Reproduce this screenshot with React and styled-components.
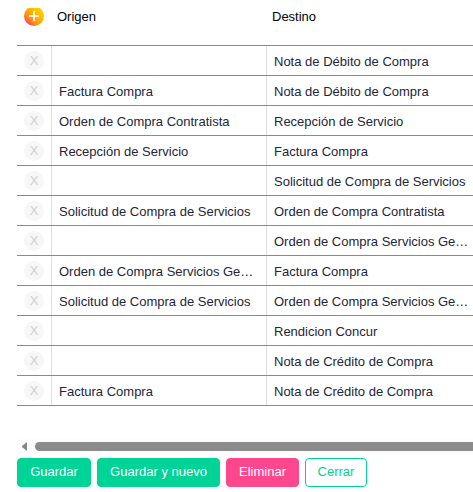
import React from "react";
import styled, { createGlobalStyle } from "styled-components";

const GlobalStyle = createGlobalStyle`
  * { box-sizing: border-box; }
  html, body { margin: 0; background: #fff; overflow: hidden; }
  body { font-family: "Liberation Sans", Arial, sans-serif; font-size: 13px; }
`;

const Panel = styled.main`
  height: 492px;
  padding-left: 17px;
  display: flex;
  flex-direction: column;
  overflow: hidden;
`;

const Grid = styled.section`
  height: 439px;
  flex: none;
  padding-top: 8px;
`;

const Header = styled.div`
  display: grid;
  grid-template-columns: 35px 215px 1fr;
  height: 38px;
  border-bottom: 1px solid #8a8a8d;
  color: #000;
`;

const HeaderAction = styled.div`
  height: 18px;
  padding-left: 7px;
  display: flex;
  align-items: flex-end;
  overflow: hidden;
`;

const AddButton = styled.button`
  flex: none;
  width: 20px;
  height: 20px;
  padding: 0;
  border: 0;
  border-radius: 50%;
  background: linear-gradient(45deg, #ff2a80 8%, #ff8a1c 32%, #ffb400 55%, #ffe000 100%);
  display: grid;
  place-items: center;
`;

const HeaderCell = styled.div`
  padding-left: 5px;
  line-height: 17px;
`;

const Row = styled.div`
  display: grid;
  grid-template-columns: 35px 215px 1fr;
  height: 30px;
  border-bottom: 1px solid #8a8a8d;
`;

const ActionCell = styled.div`
  padding: 5px 0 0 7px;
  border-right: 1px solid #dedede;
`;

const RemoveButton = styled.button`
  display: block;
  width: 20px;
  height: 20px;
  padding: 0;
  border: 0;
  border-radius: 50%;
  background: #f7f7f7;
  color: #d0d0d0;
  font: 13px/20px "Liberation Sans", Arial, sans-serif;
`;

const Cell = styled.div`
  min-width: 0;
  padding: 0 ${(p) => (p.$divided ? 12 : 4)}px 0 7px;
  border-right: ${(p) => (p.$divided ? "1px solid #dedede" : "0")};
  color: #23263b;
  line-height: 31px;
  white-space: nowrap;
  overflow: hidden;
  text-overflow: ellipsis;
`;

const ScrollTrack = styled.div`
  display: flex;
  align-items: center;
  flex: none;
  height: 15px;
  padding-left: 5px;
  background: #fcfcfc;
`;

const ScrollThumb = styled.div`
  flex: 1;
  height: 9px;
  margin-left: 8px;
  border-radius: 5px 0 0 5px;
  background: #8b8b8b;
`;

const Actions = styled.footer`
  display: flex;
  gap: 6px;
  padding-top: 4px;
`;

const tones = {
  primary: ["#00d396", "#fff", "#00d396"],
  danger: ["#ff478e", "#fff", "#ff478e"],
  outline: ["#fff", "#00d396", "#00d396"],
};

const Button = styled.button`
  width: ${(p) => p.$width}px;
  height: 29px;
  padding: 0 0 2px;
  border: 1px solid ${(p) => tones[p.$tone][2]};
  border-radius: 4px;
  background: ${(p) => tones[p.$tone][0]};
  color: ${(p) => tones[p.$tone][1]};
  font: 13px "Liberation Sans", Arial, sans-serif;
`;

const rows = [
  ["", "Nota de Débito de Compra"],
  ["Factura Compra", "Nota de Débito de Compra"],
  ["Orden de Compra Contratista", "Recepción de Servicio"],
  ["Recepción de Servicio", "Factura Compra"],
  ["", "Solicitud de Compra de Servicios"],
  ["Solicitud de Compra de Servicios", "Orden de Compra Contratista"],
  ["", "Orden de Compra Servicios Ge…"],
  ["Orden de Compra Servicios Ge…", "Factura Compra"],
  ["Solicitud de Compra de Servicios", "Orden de Compra Servicios Ge…"],
  ["", "Rendicion Concur"],
  ["", "Nota de Crédito de Compra"],
  ["Factura Compra", "Nota de Crédito de Compra"],
];

export default function App() {
  return (
    <Panel>
      <GlobalStyle />
      <Grid>
        <Header>
          <HeaderAction>
            <AddButton aria-label="Agregar">
              <svg width="20" height="20" viewBox="0 0 20 20" fill="none" stroke="#fff" strokeWidth="1.7">
                <path d="M5 10h10M10 5v10" />
              </svg>
            </AddButton>
          </HeaderAction>
          <HeaderCell>Origen</HeaderCell>
          <HeaderCell>Destino</HeaderCell>
        </Header>
        {rows.map(([origin, target], i) => (
          <Row key={i}>
            <ActionCell>
              <RemoveButton>X</RemoveButton>
            </ActionCell>
            <Cell $divided>{origin}</Cell>
            <Cell>{target}</Cell>
          </Row>
        ))}
      </Grid>
      <ScrollTrack>
        <svg width="5" height="9" viewBox="0 0 5 9" fill="#858585">
          <path d="M5 0v9L0 5V4z" />
        </svg>
        <ScrollThumb />
      </ScrollTrack>
      <Actions>
        <Button $tone="primary" $width={74}>Guardar</Button>
        <Button $tone="primary" $width={123}>Guardar y nuevo</Button>
        <Button $tone="danger" $width={73}>Eliminar</Button>
        <Button $tone="outline" $width={62}>Cerrar</Button>
      </Actions>
    </Panel>
  );
}
